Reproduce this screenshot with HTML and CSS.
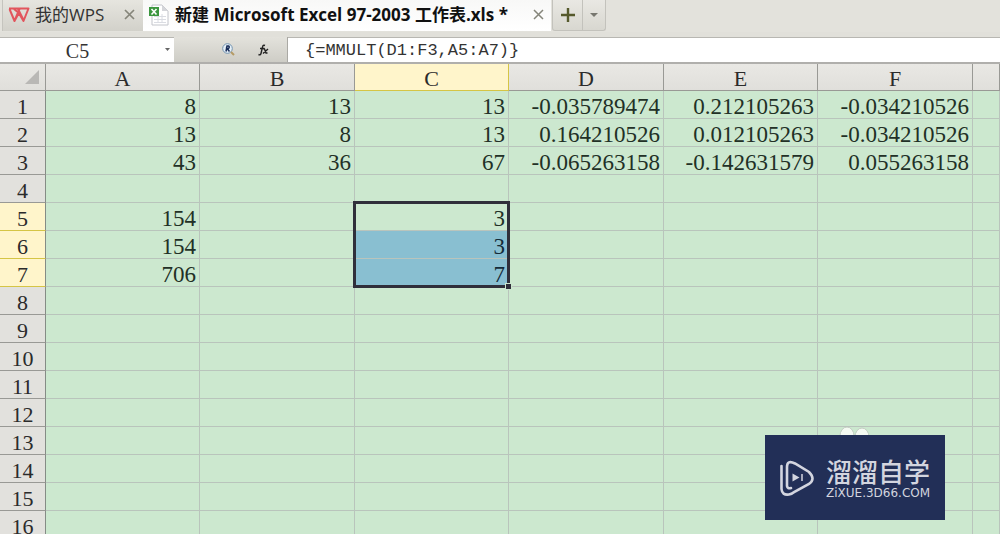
FILE: index.html
```html
<!DOCTYPE html>
<html lang="zh-CN">
<head>
<meta charset="utf-8">
<title>新建 Microsoft Excel 97-2003 工作表.xls</title>
<link rel="stylesheet" href="styles.css">
</head>
<body>
<div class="app">
  <header class="tabs">
    <div class="tab tab-home">
      <svg class="wps" viewBox="0 0 22 16" width="22" height="16" aria-hidden="true"><path d="M1 1.500H20.500L15.500 14L10.800 6L6.500 14L1.500 2M6 2L10.800 6M10 2L15.500 13M6.500 14L11.500 2" fill="none" stroke="#e2555d" stroke-width="2" stroke-linejoin="round"/></svg>
      <span class="tab-name">我的WPS</span>
      <button class="close" aria-label="关闭"><svg viewBox="0 0 11 11" width="11" height="11"><path d="M1 1L10 10M10 1L1 10" stroke="#85857a" stroke-width="1.700"/></svg></button>
    </div>
    <div class="tab tab-active">
      <svg class="file" viewBox="0 0 20 22" width="20" height="22" aria-hidden="true"><path d="M3 1H13L19 7V21H3Z" fill="#fff" stroke="#c2c4ca"/><path d="M13 1V7H19Z" fill="#d5d6da"/><path d="M5 12.500H17M5 15.500H17M5 18.500H17M9 10V19M13 10V19" stroke="#dadce2"/><path d="M0 3H10V12H0Z" fill="#3c963f"/><path d="M2.500 5L7.500 10.500M7.500 5L2.500 10.500" stroke="#fff" stroke-width="1.600"/></svg>
      <span class="tab-name">新建 Microsoft Excel 97-2003 工作表.xls *</span>
      <button class="close" aria-label="关闭"><svg viewBox="0 0 11 11" width="11" height="11"><path d="M1 1L10 10M10 1L1 10" stroke="#85857a" stroke-width="1.500"/></svg></button>
    </div>
    <div class="new-tab">
      <button class="add" aria-label="新建"><svg viewBox="0 0 14 14" width="14" height="14"><path d="M7 0V14M0 7H14" stroke="#55592c" stroke-width="2.400"/></svg></button>
      <button class="more" aria-label="更多"><svg viewBox="0 0 8 4" width="8" height="4"><path d="M0 0H8L4 4Z" fill="#77776f"/></svg></button>
    </div>
  </header>
  <div class="formula-bar">
    <div class="name-box">
      <input class="name-input" aria-label="名称框" value="C5">
      <button class="name-drop" aria-label="名称列表"><svg viewBox="0 0 5 3" width="5" height="3"><path d="M0 0H5L2.500 3Z" fill="#666"/></svg></button>
    </div>
    <div class="tools">
      <button class="tool" aria-label="查找"><svg viewBox="0 0 13 13" width="13" height="13"><circle cx="5.500" cy="5.500" r="4.800" fill="#e7f1f8" stroke="#7293b0"/><path d="M4 8.500L5 3H6.500Q8 3.500 6.500 5.500H5L7.500 8.500" fill="none" stroke="#182c58" stroke-width="1.500"/><path d="M9 9L12 12" stroke="#b59b66" stroke-width="2"/></svg></button>
      <button class="tool" aria-label="插入函数"><svg viewBox="0 0 11 12" width="11" height="12"><path d="M7 1.500Q5 .5 4.500 3L3 9.500Q2.500 11.500.5 10.500M2 4.500H6.500M5.500 5L6.500 5L8 9L9.500 9M10 5L5 9.500" fill="none" stroke="#222" stroke-width="1.400"/></svg></button>
    </div>
    <input class="formula" aria-label="编辑栏" value="{=MMULT(D1:F3,A5:A7)}">
  </div>
  <main class="sheet">
    <table class="grid">
      <colgroup><col class="w-head"><col class="w-odd"><col class="w-even"><col class="w-odd"><col class="w-even"><col class="w-odd"><col class="w-even"><col></colgroup>
      <thead><tr><th class="corner"><svg viewBox="0 0 14 14" width="14" height="14" aria-hidden="true"><path d="M14 0V14H0Z" fill="#b9b8b5"/></svg></th><th>A</th><th>B</th><th class="picked">C</th><th>D</th><th>E</th><th>F</th><th></th></tr></thead>
      <tbody>
        <tr><th>1</th><td>8</td><td>13</td><td>13</td><td>-0.035789474</td><td>0.212105263</td><td>-0.034210526</td><td></td></tr>
        <tr><th>2</th><td>13</td><td>8</td><td>13</td><td>0.164210526</td><td>0.012105263</td><td>-0.034210526</td><td></td></tr>
        <tr><th>3</th><td>43</td><td>36</td><td>67</td><td>-0.065263158</td><td>-0.142631579</td><td>0.055263158</td><td></td></tr>
        <tr><th>4</th><td></td><td></td><td></td><td></td><td></td><td></td><td></td></tr>
        <tr><th class="picked">5</th><td>154</td><td></td><td class="anchor">3<span class="selection"></span></td><td></td><td></td><td></td><td></td></tr>
        <tr><th class="picked">6</th><td>154</td><td></td><td class="selected">3</td><td></td><td></td><td></td><td></td></tr>
        <tr><th class="picked">7</th><td>706</td><td></td><td class="selected">7</td><td></td><td></td><td></td><td></td></tr>
        <tr><th>8</th><td></td><td></td><td></td><td></td><td></td><td></td><td></td></tr>
        <tr><th>9</th><td></td><td></td><td></td><td></td><td></td><td></td><td></td></tr>
        <tr><th>10</th><td></td><td></td><td></td><td></td><td></td><td></td><td></td></tr>
        <tr><th>11</th><td></td><td></td><td></td><td></td><td></td><td></td><td></td></tr>
        <tr><th>12</th><td></td><td></td><td></td><td></td><td></td><td></td><td></td></tr>
        <tr><th>13</th><td></td><td></td><td></td><td></td><td></td><td></td><td></td></tr>
        <tr><th>14</th><td></td><td></td><td></td><td></td><td></td><td></td><td></td></tr>
        <tr><th>15</th><td></td><td></td><td></td><td></td><td></td><td></td><td></td></tr>
        <tr><th>16</th><td></td><td></td><td></td><td></td><td></td><td></td><td></td></tr>
      </tbody>
    </table>
  </main>
  <aside class="badge">
    <svg class="ears" viewBox="0 0 32 12" width="32" height="12" aria-hidden="true"><ellipse cx="8" cy="10" rx="7" ry="9" fill="#f4faf2" stroke="#c3cdc2"/><ellipse cx="23" cy="11" rx="7" ry="9" fill="#f4faf2" stroke="#c3cdc2"/></svg>
    <svg viewBox="0 0 36 36" width="36" height="36" aria-hidden="true"><g fill="none" stroke="#d3d5df" stroke-width="2.600" stroke-linecap="round"><path d="M2.500 6V29Q3 35.500 10 34.500Q13 34 16 31.500L30 24Q37 19 30 12L16 3.500Q8 -.5 8 7V26Q8.500 29 12 28"/></g><path d="M13.500 13.500L20.500 17.500L13.500 21.500Z" fill="#d3d5df"/><path d="M23 14V21" stroke="#d3d5df" stroke-width="1.500"/></svg>
    <div class="badge-text"><strong>溜溜自学</strong><span>ZiXUE.3D66.COM</span></div>
  </aside>
</div>
</body>
</html>
```
FILE: styles.css
```css
* { box-sizing: border-box; }
body { margin: 0; overflow: hidden; background: #cce8cf; }
button { padding: 0; border: 0; background: none; display: flex; align-items: center; justify-content: center; }
input { border: 0; padding: 0; min-width: 0; outline: 0; background: none; color: #333; }
svg { display: block; flex: none; }

.app { position: relative; height: 100vh; overflow: hidden; display: flex; flex-direction: column; }

.tabs { flex: none; height: 32px; display: flex; align-items: stretch; background: #e3e2dc; font: 17px/28px "Open Sans", "Noto Sans CJK SC", sans-serif; color: #333; }
.tab { display: flex; align-items: center; height: 31px; padding-bottom: 2px; white-space: nowrap; }
.tab-home { width: 141px; padding-left: 5px; padding-right: 7px; margin-left: 2px; border-left: 1px solid #c5c4be; background: linear-gradient(#e6e5df, #d2d1ca); }
.tab-home .tab-name { margin-left: 5px; }
.tab-active { width: 408px; padding-left: 6px; padding-right: 6px; background: linear-gradient(#f8f8f7, #fff); font-weight: 700; color: #111; }
.tab-active .tab-name { margin-left: 6px; }
.close { margin-left: auto; width: 13px; height: 28px; }
.new-tab { display: flex; width: 54px; height: 31px; margin-left: 1px; border: 1px solid #c3c2bc; border-top: 0; border-radius: 0 0 3px 3px; background: linear-gradient(#e9e8e3, #d8d7d0); }
.add { flex: 1; border-right: 1px solid #c3c2bc; }
.more { width: 22px; }

.formula-bar { flex: none; height: 32px; display: flex; border-top: 5px solid #e1e0da; border-bottom: 2px solid #b0afac; background: #fff; box-shadow: inset 0 1px #b8b7b2; }
.name-box { width: 174px; display: flex; }
.name-input { flex: 1; text-align: center; font: 20px/22px "Liberation Serif", serif; padding: 3px 5px 0 0; }
.name-drop { width: 14px; }
.tools { width: 114px; display: flex; align-items: center; justify-content: flex-end; gap: 23px; padding-right: 18px; border-right: 1px solid #aaa9a4; background: linear-gradient(#e3e2dc, #cecdc6); }
.formula { flex: 1; padding: 3px 0 0 17px; font: 17px/22px "Liberation Mono", monospace; }

.sheet { flex: 1; overflow: hidden; }
.grid { width: 100%; table-layout: fixed; border-collapse: separate; border-spacing: 0; font: 23px/23px "Liberation Serif", serif; color: #223026; }
.w-head { width: 46px; }
.w-odd { width: 154px; }
.w-even { width: 155px; }
.grid tr { height: 28px; }
.grid thead tr { height: 27px; }
th, td { padding: 4px 0 0; border-right: 1px solid #b9c4bc; border-bottom: 1px solid #b9c4bc; }
td { text-align: right; padding-right: 3px; }
th { font-weight: 400; font-size: 22px; background: #e2e1dd; color: #2b2b2b; border-color: #999995; }
thead th { line-height: 22px; background: linear-gradient(#e9e8e4, #e0dfdb); }
tbody th:first-child { border-right-color: #858c86; }
th.picked { background: #fff5cb; border-color: #d5c545; }
.corner { padding-top: 0; }
.corner svg { margin-left: 25px; }
.anchor { position: relative; }
.selected { background: #89bfd1; color: #142b38; }
.selection { position: absolute; left: -2px; top: -2px; width: 157px; height: 87px; border: 3px solid #302f3b; }
.selection::after { content: ""; position: absolute; right: -4px; bottom: -4px; width: 5px; height: 5px; background: #302f3b; outline: 1px solid #cce8cf; }

.badge { position: absolute; right: 55px; bottom: 14px; width: 180px; height: 85px; padding-left: 14px; display: flex; align-items: center; gap: 11px; background: #222f57; color: #d3d5df; }
.ears { position: absolute; left: 74px; top: -9px; z-index: -1; }
.badge-text { display: flex; flex-direction: column; gap: 1px; white-space: nowrap; }
.badge-text strong { font: 500 26px/30px "Noto Sans CJK SC", sans-serif; }
.badge-text span { font: 12px/12px "DejaVu Sans", sans-serif; }
```
